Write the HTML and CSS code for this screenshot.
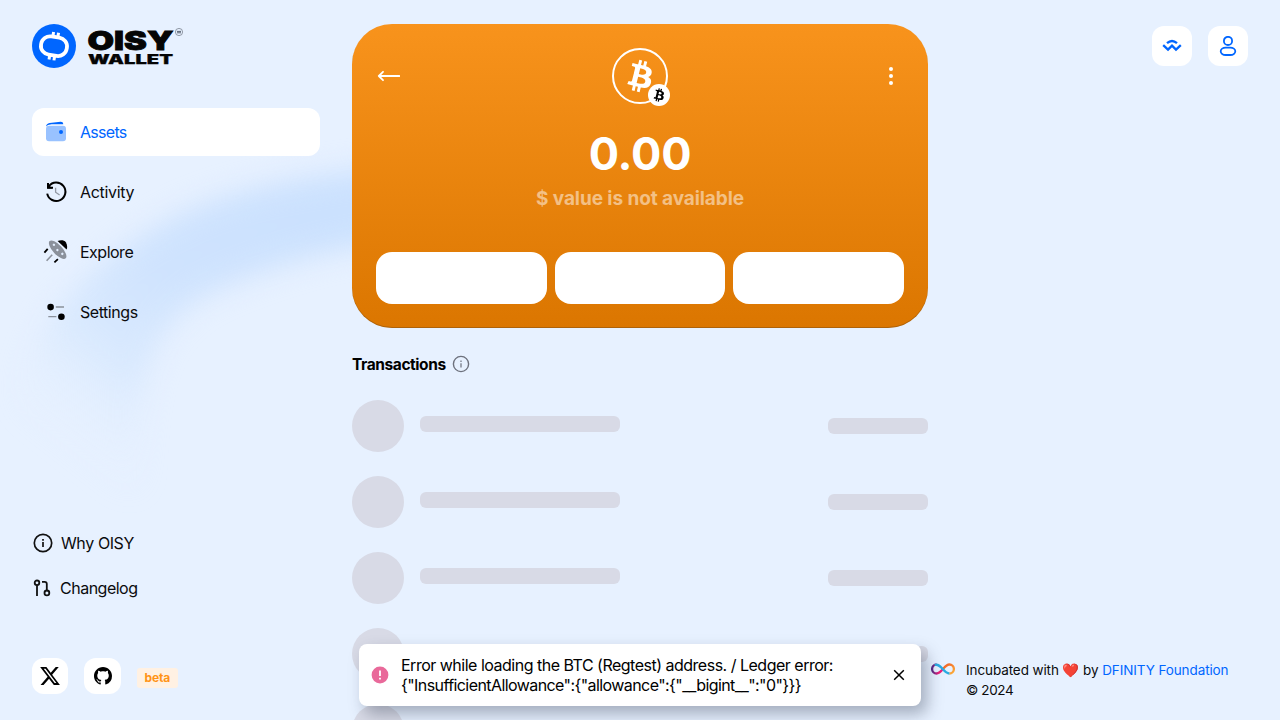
FILE: index.html
```html
<!DOCTYPE html>
<html lang="en">
<head>
<meta charset="utf-8">
<title>OISY Wallet</title>
<link rel="stylesheet" href="styles.css">
</head>
<body>
<svg class="backdrop" width="1280" height="720" viewBox="0 0 1280 720" aria-hidden="true">
  <defs>
    <linearGradient id="arc" gradientUnits="userSpaceOnUse" x1="290" y1="190" x2="80" y2="460">
      <stop offset="0" stop-color="#cbe1fe"/><stop offset=".4" stop-color="#cfe3fe"/><stop offset=".7" stop-color="#d9e9fe"/><stop offset="1" stop-color="#e7f1ff" stop-opacity="0"/>
    </linearGradient>
    <filter id="soft" x="-30%" y="-30%" width="160%" height="160%" color-interpolation-filters="sRGB"><feGaussianBlur stdDeviation="14"/></filter>
    <symbol id="btc" viewBox="0 0 32 32"><path d="M23.189 14.02c.314-2.096-1.283-3.223-3.465-3.975l.708-2.84-1.728-.43-.69 2.765c-.454-.114-.92-.22-1.385-.326l.695-2.783L15.596 6l-.708 2.839c-.376-.086-.746-.17-1.104-.26l.002-.009-2.384-.595-.46 1.846s1.283.294 1.256.312c.7.175.826.638.805 1.006l-.806 3.235c.048.012.11.03.18.057l-.183-.045-1.13 4.532c-.086.212-.303.531-.793.41.018.025-1.256-.313-1.256-.313l-.858 1.978 2.25.561c.418.105.828.215 1.231.318l-.715 2.872 1.727.43.708-2.84c.472.127.93.245 1.378.357l-.706 2.828 1.728.43.715-2.866c2.948.558 5.164.333 6.097-2.333.752-2.146-.037-3.385-1.588-4.192 1.13-.26 1.98-1.003 2.207-2.538zm-3.95 5.538c-.533 2.147-4.148.986-5.32.695l.95-3.805c1.172.293 4.929.872 4.37 3.11zm.535-5.569c-.487 1.953-3.495.96-4.47.717l.86-3.45c.975.243 4.118.696 3.61 2.733z"/></symbol>
  </defs>
  <path d="M14 490C8 350 62 285 155 228C220 190 290 178 430 162L430 236C350 243 270 264 205 295C150 326 134 380 138 490Z" fill="url(#arc)" filter="url(#soft)"/>
</svg>

<div class="page">
  <aside class="side">
    <a class="logo">
      <svg width="154" height="44" viewBox="0 0 154 44">
        <circle cx="22" cy="22" r="22" fill="#0066ff"/>
        <g transform="rotate(9 22 22)" stroke="#fff" fill="none">
          <rect x="9" y="13" width="26" height="18.4" rx="9" ry="8.6" stroke-width="3.8"/>
          <path d="M19.4 12.4V8.2M24.4 12.4V8.2M19.2 32v4.2M24.2 32v4.2" stroke-width="3"/>
        </g>
        <text class="logo-text" x="55.5" y="26" font-size="25.5" textLength="86" lengthAdjust="spacingAndGlyphs" stroke-width=".8">OISY</text>
        <text class="logo-text" x="56" y="39.6" font-size="12.5" textLength="85" lengthAdjust="spacingAndGlyphs" stroke-width=".25">WALLET</text>
        <circle cx="147" cy="8" r="3.6" fill="none" stroke="#6b7280" stroke-width=".7"/>
        <path d="M145 7.4h4M145 8.8h4" stroke="#4b5563" stroke-width=".9"/>
      </svg>
    </a>
    <nav class="nav">
      <a class="item active">
        <svg width="24" height="24" viewBox="0 0 24 24"><rect x="2" y="5.8" width="20" height="15.4" rx="3" fill="#99c2ff"/><path d="M2 6.6C2.2 4.6 3.4 3.4 5.6 3L16.5 1.7C18.2 1.6 19.2 2.4 19.3 4.2L11 4.3C6 4.3 3.4 4.8 2 6.6Z" fill="#0066ff"/><circle cx="17" cy="12" r="2" fill="#0066ff"/></svg>
        <span class="t-assets">Assets</span></a>
      <a class="item">
        <svg width="24" height="24" viewBox="0 0 24 24" fill="none"><path d="M4.8 6.3A9.2 9.2 0 1 1 3.2 13.6" stroke="#000" stroke-width="2"/><path d="M3.4 3.4V8.4H8.4Z" fill="#000"/><path d="M4 3V7.8H9" stroke="#000" stroke-width="2"/><path d="M11.6 7.8V12.2L15.6 15" stroke="#9299a3" stroke-width="1.3"/></svg>
        <span class="t-activity">Activity</span></a>
      <a class="item">
        <svg width="24" height="24" viewBox="0 0 24 24" overflow="visible"><path d="M13.6 1C16.5 0 20-.2 22 2.4C23.4 5 23.4 8 22.6 9.6Z" fill="#000"/><g transform="rotate(47 13.8 9.6)"><ellipse cx="13.8" cy="9.8" rx="11.8" ry="4.7" fill="#8b919b"/><circle cx="7.6" cy="9.2" r="1.2" fill="#e3eefe"/><circle cx="13.8" cy="10.2" r="1.2" fill="#e3eefe"/><circle cx="20" cy="9.2" r="1.2" fill="#e3eefe"/></g><path d="M3.7 8.8.4 12.7M13.9 19.2 10.4 22.4" stroke="#000" stroke-width="1.8"/><path d="M8.2 14.7 2.6 20.8" stroke="#8b919b" stroke-width="1.6"/></svg>
        <span class="t-explore">Explore</span></a>
      <a class="item">
        <svg width="24" height="24" viewBox="0 0 24 24"><circle cx="6.6" cy="7.1" r="3.3" fill="#000"/><circle cx="17.4" cy="16.8" r="3.3" fill="#000"/><path d="M11.8 7H20M4.3 16.6H12.4" stroke="#8b919b" stroke-width="1.4"/></svg>
        <span class="t-settings">Settings</span></a>
    </nav>
    <div class="links">
      <a class="link why"><svg width="22" height="22" viewBox="0 0 22 22" fill="none" stroke="#111"><circle cx="11" cy="11" r="8.7" stroke-width="1.7"/><path d="M11 10v5M11 7v1.8" stroke-width="1.7"/></svg><span>Why OISY</span></a>
      <a class="link change"><svg width="20" height="20" viewBox="0 0 20 20" fill="none" stroke="#111" stroke-width="1.8"><circle cx="5" cy="4.8" r="2.3"/><path d="M5 7.2V18M10 3.8H12.6Q14.8 3.8 14.8 6V12.4"/><circle cx="14.9" cy="14.9" r="2.4"/></svg><span>Changelog</span></a>
    </div>
    <div class="social">
      <a class="tile"><svg width="22" height="22" viewBox="0 0 24 24"><path d="M18.244 2.25h3.308l-7.227 8.26 8.502 11.24H16.17l-5.214-6.817L4.99 21.75H1.68l7.73-8.835L1.254 2.25H8.08l4.713 6.231zm-1.161 17.52h1.833L7.084 4.126H5.117z"/></svg></a>
      <a class="tile"><svg width="18" height="18" viewBox="0 0 16 16"><path d="M8 0C3.58 0 0 3.58 0 8c0 3.54 2.29 6.53 5.47 7.59.4.07.55-.17.55-.38 0-.19-.01-.82-.01-1.49-2.01.37-2.53-.49-2.69-.94-.09-.23-.48-.94-.82-1.13-.28-.15-.68-.52-.01-.53.63-.01 1.08.58 1.23.82.72 1.21 1.87.87 2.33.66.07-.52.28-.87.51-1.07-1.78-.2-3.64-.89-3.64-3.95 0-.87.31-1.59.82-2.15-.08-.2-.36-1.02.08-2.12 0 0 .67-.21 2.2.82.64-.18 1.32-.27 2-.27s1.36.09 2 .27c1.53-1.04 2.2-.82 2.2-.82.44 1.1.16 1.92.08 2.12.51.56.82 1.27.82 2.15 0 3.07-1.87 3.75-3.65 3.95.29.25.54.73.54 1.48 0 1.07-.01 1.93-.01 2.2 0 .21.15.46.55.38A8.01 8.01 0 0 0 16 8c0-4.42-3.58-8-8-8z"/></svg></a>
      <span class="beta">beta</span>
    </div>
  </aside>

  <main class="main">
    <section class="hero">
      <div class="hero-top">
        <svg width="24" height="24" viewBox="0 0 24 24" fill="none" stroke="#fff" stroke-width="1.8" stroke-linecap="round" stroke-linejoin="round"><path d="M23.3 12H2.8M7 7.8 2.8 12l4.2 4.2"/></svg>
        <div class="token">
          <svg width="52" height="52" fill="#fff"><use href="#btc"/></svg>
          <span class="badge"><svg width="22" height="22"><use href="#btc"/></svg></span>
        </div>
        <svg width="24" height="24" viewBox="0 0 24 24" fill="#fff"><circle cx="11" cy="5" r="2"/><circle cx="11" cy="12" r="2"/><circle cx="11" cy="19" r="2"/></svg>
      </div>
      <div class="amount">0.00</div>
      <div class="fiat">$ value is not available</div>
      <div class="actions"><span></span><span></span><span></span></div>
    </section>
    <h2 class="heading"><span>Transactions</span><svg width="18" height="18" viewBox="0 0 18 18" fill="none" stroke="#6d717d"><circle cx="9" cy="9" r="7.6" stroke-width="1.4"/><path d="M9 8.2v4.3M9 5.4v1.5" stroke-width="1.2"/></svg></h2>
    <div class="rows">
      <div class="row"><i class="dot"></i><i class="bar"></i><i class="bar short"></i></div>
      <div class="row"><i class="dot"></i><i class="bar"></i><i class="bar short"></i></div>
      <div class="row"><i class="dot"></i><i class="bar"></i><i class="bar short"></i></div>
      <div class="row"><i class="dot"></i><i class="bar"></i><i class="bar short"></i></div>
      <div class="row"><i class="dot"></i><i class="bar"></i><i class="bar short"></i></div>
    </div>
  </main>

  <div class="right">
    <div class="top-buttons">
      <a class="tool"><svg width="20" height="20" viewBox="0 0 20 20" fill="none" stroke="#0066ff" stroke-width="2.3"><path d="M1.2 9.2 6 13.6 10 9.6 14 13.6 18.8 9.2"/><path d="M5 7.2Q10 2.8 15 7.2"/></svg></a>
      <a class="tool"><svg width="20" height="20" viewBox="0 0 20 20" fill="none" stroke="#0066ff" stroke-width="1.8"><circle cx="10" cy="4.9" r="4.1"/><rect x="2.7" y="11.6" width="14.6" height="7.4" rx="5" ry="3.7"/></svg></a>
    </div>
    <footer class="footer">
      <svg width="24" height="12" viewBox="0 0 24 12" fill="none" stroke-width="2.3"><defs><linearGradient id="warm" x1="0" y1="0" x2="1" y2="1"><stop offset="0" stop-color="#f15a24"/><stop offset="1" stop-color="#fbb03b"/></linearGradient><linearGradient id="pink" x1="0" y1="0" x2="1" y2="0"><stop offset="0" stop-color="#522785"/><stop offset=".6" stop-color="#ed1e79"/></linearGradient></defs><path d="M12 6C15 2.5 16.5 1.5 18.4 1.5A4.5 4.5 0 0 1 18.4 10.5" stroke="url(#warm)"/><path d="M12 6C9 9.5 7.5 10.5 5.6 10.5A4.5 4.5 0 0 1 5.6 1.5" stroke="url(#pink)"/><path d="M3.6 2C10 -.5 12 10.5 18.4 10.5" stroke="#29abe2"/></svg>
      <p><span class="inc">Incubated with <span class="heart">❤️</span> by <a>DFINITY Foundation</a></span><br><span class="year">© 2024</span></p>
    </footer>
  </div>
</div>

<div class="toast">
  <svg width="18" height="18" viewBox="0 0 18 18"><circle cx="9" cy="9" r="8.4" fill="#e9699a"/><path d="M9 4.5v5.6M9 11.7v1.9" stroke="#fff" stroke-width="1.8"/></svg>
  <p><span class="line1">Error while loading the BTC (Regtest) address. / Ledger error:</span><br><span class="line2">{"InsufficientAllowance":{"allowance":{"__bigint__":"0"}}}</span></p>
  <svg width="12" height="12" viewBox="0 0 12 12" stroke="#000" stroke-width="1.5"><path d="M1.2 1.2l9.6 9.6M10.8 1.2l-9.6 9.6"/></svg>
</div>
</body>
</html>
```
FILE: styles.css
```css
* { box-sizing: border-box; }
body {
  margin: 0;
  height: 720px;
  overflow: hidden;
  background: #e7f1ff;
  color: #0b0b0d;
  font: 16px/20px Inter, "Liberation Sans", sans-serif;
}
svg { display: block; flex: none; }
p, h2 { margin: 0; }
.backdrop { position: absolute; left: 0; top: 0; z-index: -1; }

.page {
  display: grid;
  grid-template-columns: 288px 576px 1fr;
  grid-template-rows: minmax(0, 1fr);
  gap: 32px;
  height: 720px;
  padding: 24px 32px 0;
  overflow: hidden;
}
.side { display: flex; flex-direction: column; padding-bottom: 26px; }
.logo { height: 84px; }
.logo-text { font-weight: 900; font-family: Inter, sans-serif; fill: #050505; stroke: #050505; }
.nav { display: flex; flex-direction: column; gap: 12px; }
.item {
  display: flex;
  align-items: center;
  gap: 12px;
  height: 48px;
  padding: 0 12px;
  border-radius: 12px;
}
.item.active { background: #fff; color: #0066ff; }
.item span { white-space: nowrap; }
.t-assets { letter-spacing: -.7px; }
.t-activity { letter-spacing: -.3px; }
.t-explore { letter-spacing: -.5px; }
.t-settings { letter-spacing: -.45px; }
.links { display: flex; flex-direction: column; gap: 23px; margin-top: auto; }
.link { display: flex; align-items: center; height: 22px; }
.why { gap: 7px; letter-spacing: -.4px; }
.change { gap: 8px; letter-spacing: -.5px; }
.social { display: flex; align-items: center; gap: 16px; margin-top: 59px; }
.tile { display: grid; place-items: center; width: 36.4px; height: 36px; border-radius: 12px; background: #fff; }
.beta {
  width: 41px;
  height: 20px;
  margin-top: 4px;
  border-radius: 3px;
  background: #fff1e3;
  color: #ff9416;
  font-size: 12px;
  font-weight: 700;
  letter-spacing: -.2px;
  text-align: center;
}

.main { min-width: 0; }
.hero {
  height: 304px;
  padding: 24px;
  border-radius: 40px;
  background: linear-gradient(#f8931c, #db7600);
  box-shadow: inset 0 -1px 0 rgba(120, 75, 20, .45);
  color: #fff;
  text-align: center;
}
.hero-top { display: flex; align-items: center; justify-content: space-between; height: 56px; }
.token {
  position: relative;
  width: 56px;
  height: 56px;
  border: 2px solid #fff;
  border-radius: 50%;
}
.badge {
  position: absolute;
  right: -4px;
  bottom: -4px;
  width: 22px;
  height: 22px;
  border-radius: 50%;
  background: #fff;
}
.amount { margin-top: 25px; font-size: 45px; font-weight: 700; line-height: 50px; letter-spacing: -.2px; }
.fiat { margin-top: 8px; font-size: 19px; line-height: 24px; font-weight: 700; color: rgba(255, 255, 255, .5); letter-spacing: -.08px; }
.actions { display: grid; grid-template-columns: repeat(3, 1fr); gap: 8px; margin-top: 41px; }
.actions span { height: 52px; border-radius: 16px; background: #fff; }
.heading { display: flex; align-items: center; gap: 6px; height: 20px; margin: 26px 0; font-size: 15.5px; font-weight: 700; letter-spacing: -.42px; color: #000; }
.heading span { padding-top: 2px; }
.rows { display: flex; flex-direction: column; gap: 24px; }
.row { display: flex; align-items: center; gap: 16px; height: 52px; }
.dot { width: 52px; height: 52px; border-radius: 50%; background: #d8dae6; }
.bar { width: 200px; height: 16px; margin-bottom: 4px; border-radius: 6px; background: #d8dae6; }
.bar.short { width: 100px; margin: 0 0 0 auto; }

.right { display: flex; flex-direction: column; justify-content: space-between; min-width: 0; padding: 2px 0 20px; }
.top-buttons { display: flex; justify-content: flex-end; gap: 16px; }
.tool { display: grid; place-items: center; width: 40px; height: 40px; border-radius: 12px; background: #fff; }
.footer { display: flex; gap: 11px; margin-left: -29px; font-size: 13.5px; white-space: nowrap; }
.footer svg { margin-top: 3px; }
.footer a { color: #0066ff; }
.inc { letter-spacing: -.1px; }
.year { letter-spacing: -.4px; }
.heart { font-family: "Noto Color Emoji", sans-serif; letter-spacing: 0; }

.toast {
  position: absolute;
  left: 359px;
  top: 644px;
  display: flex;
  align-items: center;
  gap: 12px;
  width: 562px;
  height: 62px;
  padding: 0 16px 0 12px;
  border-radius: 8px;
  background: #fff;
  box-shadow: 6px 8px 16px rgba(60, 70, 90, .4);
}
.toast p { flex: 1; white-space: nowrap; color: #000; }
.line1 { letter-spacing: -.5px; }
.line2 { letter-spacing: -.58px; }
```
